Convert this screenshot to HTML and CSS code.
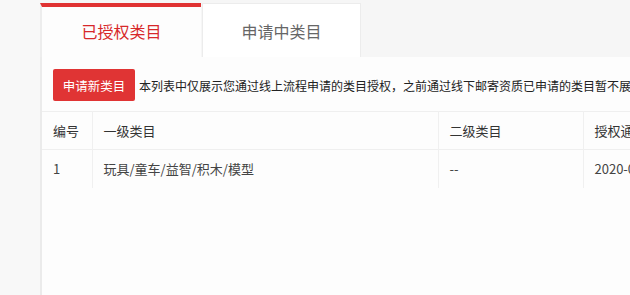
FILE: index.html
```html
<!DOCTYPE html>
<html lang="zh-CN">
<head>
<meta charset="utf-8">
<title>类目授权</title>
<link rel="stylesheet" href="styles.css">
</head>
<body>
<div class="page">
  <div class="tabs">
    <div class="tab active">已授权类目</div>
    <div class="tab">申请中类目</div>
  </div>
  <div class="panel">
    <div class="toolbar">
      <button class="btn">申请新类目</button>
      <span class="notice">本列表中仅展示您通过线上流程申请的类目授权，之前通过线下邮寄资质已申请的类目暂不展示，请知悉。</span>
    </div>
    <table class="grid">
      <colgroup>
        <col class="c1"><col class="c2"><col class="c3"><col class="c4">
      </colgroup>
      <thead>
        <tr><th>编号</th><th>一级类目</th><th>二级类目</th><th>授权通过时间</th></tr>
      </thead>
      <tbody>
        <tr><td>1</td><td>玩具/童车/益智/积木/模型</td><td>--</td><td>2020-03-18 10:22:31</td></tr>
      </tbody>
    </table>
  </div>
</div>
</body>
</html>
```
FILE: styles.css
```css
html, body {
  margin: 0;
  padding: 0;
  height: 100%;
  overflow: hidden;
}
body {
  background: #f8f8f8;
  font-family: "Noto Sans CJK SC", "Noto Sans", sans-serif;
  color: #333;
}
.page {
  margin-left: 40px;
  width: 900px;
  height: 100%;
  display: flex;
  flex-direction: column;
}
.tabs {
  display: flex;
  padding-top: 3px;
  background: #f6f6f6;
}
.tab {
  width: 159px;
  height: 54px;
  box-sizing: border-box;
  display: flex;
  align-items: center;
  justify-content: center;
  font-size: 16px;
  color: #666;
  background: #fff;
  border: 1px solid #ececec;
  border-bottom: none;
  margin-left: 1px;
}
.tab.active {
  width: 161px;
  margin-left: 0;
  color: #d7282a;
  border: none;
  border-left: 2px solid #ededed;
  border-top: 4px solid #e03232;
  padding-bottom: 2px;
  background: #fdfdfd;
}
.panel {
  flex: 1;
  background: #fdfdfd;
  border-left: 2px solid #ebebeb;
}
.toolbar {
  display: flex;
  align-items: center;
  padding: 12px 0 10px 11px;
  white-space: nowrap;
}
.btn {
  height: 32px;
  width: 82px;
  padding: 0;
  border: none;
  border-radius: 2px;
  background: #e03434;
  color: #fff;
  font-family: inherit;
  font-size: 12.5px;
}
.notice {
  margin-left: 4px;
  font-size: 12px;
  color: #222;
}
.grid {
  border-collapse: collapse;
  table-layout: fixed;
  width: 898px;
  font-size: 13px;
}
.c1 { width: 50px; }
.c2 { width: 346px; }
.c3 { width: 145px; }
.c4 { width: 357px; }
.grid th, .grid td {
  text-align: left;
  font-weight: normal;
  padding: 0 0 0 11px;
  white-space: nowrap;
  overflow: hidden;
  border-left: 1px solid #f0f0f0;
}
.grid th:first-child, .grid td:first-child {
  border-left: none;
}
.grid thead tr {
  height: 38px;
  border-top: 1px solid #efefef;
  border-bottom: 1px solid #efefef;
}
.grid tbody tr {
  height: 38px;
}
.grid td {
  color: #444;
}
```
